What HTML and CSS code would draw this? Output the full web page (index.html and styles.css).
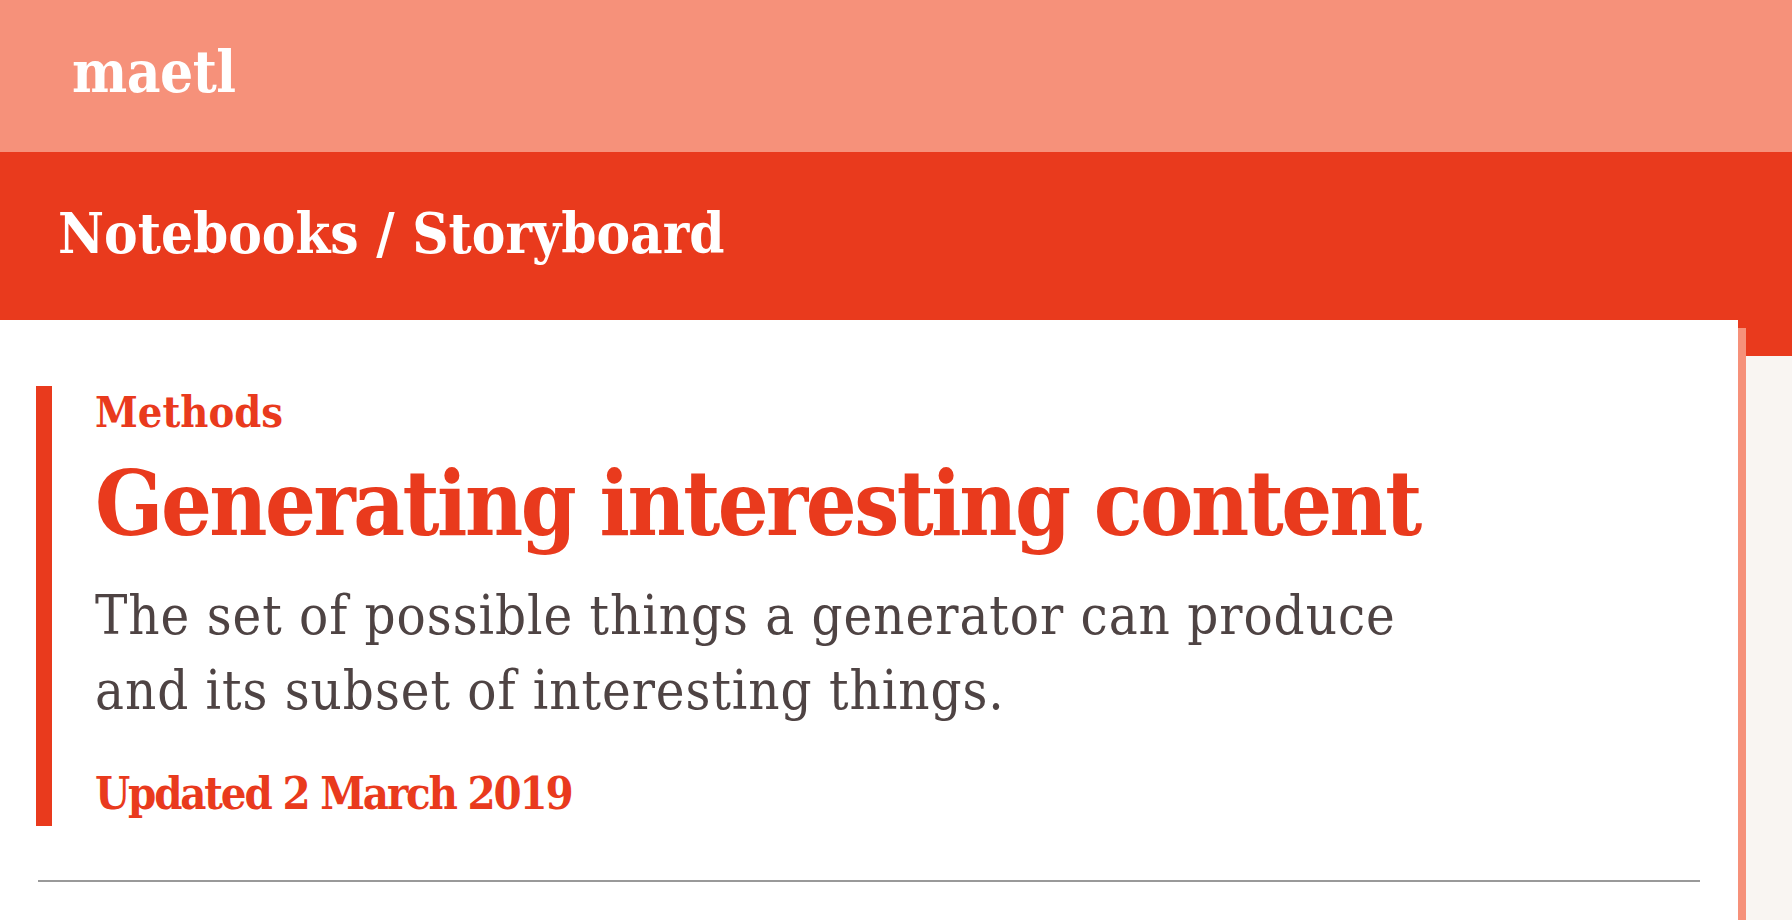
FILE: index.html
```html
<!DOCTYPE html>
<html lang="en">
<head>
<meta charset="utf-8">
<title>Generating interesting content — maetl</title>
<link rel="stylesheet" href="styles.css">
</head>
<body>
<header class="site-header">
  <a class="site-logo" href="#">maetl</a>
</header>
<nav class="section-nav">
  <h2 class="breadcrumb"><a href="#">Notebooks</a> / <a href="#">Storyboard</a></h2>
</nav>
<main class="card">
  <div class="intro">
    <p class="category">Methods</p>
    <h1 class="title">Generating interesting content</h1>
    <p class="summary">The set of possible things a generator can produce and its subset of interesting things.</p>
    <p class="updated">Updated 2 March 2019</p>
  </div>
  <hr class="rule">
</main>
</body>
</html>
```

FILE: styles.css
```css
html, body {
  margin: 0;
  padding: 0;
}
body {
  background: #f9f5f2;
  font-family: "DejaVu Serif", "Liberation Serif", serif;
  font-stretch: condensed;
  color: #4e4343;
}
a {
  color: inherit;
  text-decoration: none;
}
.site-header {
  background: #f6917a;
  height: 152px;
  box-sizing: border-box;
  padding: 39px 0 0 72px;
}
.site-logo {
  display: block;
  color: #ffffff;
  font-weight: bold;
  font-size: 58px;
  line-height: 66px;
  letter-spacing: -0.5px;
}
.section-nav {
  background: #e93a1d;
  height: 204px;
  box-sizing: border-box;
  padding: 40px 0 0 58px;
}
.breadcrumb {
  margin: 0;
  color: #ffffff;
  font-weight: bold;
  font-size: 56px;
  line-height: 82px;
}
.card {
  position: relative;
  display: block;
  background: #ffffff;
  margin: -36px 54px 0 0;
  padding: 66px 0 200px 0;
  box-shadow: 8px 8px 0 #f6917a;
}
.intro {
  margin-left: 36px;
  border-left: 16px solid #e93a1d;
  padding: 0 0 5px 43px;
}
.category {
  margin: 0;
  color: #e93a1d;
  font-weight: bold;
  font-size: 43px;
  line-height: 53px;
}
.title {
  margin: 16px 0 0 0;
  color: #e93a1d;
  font-weight: bold;
  font-size: 89px;
  line-height: 98px;
  letter-spacing: -2.5px;
}
.summary {
  margin: 25px 0 0 0;
  max-width: 1360px;
  font-size: 54px;
  line-height: 75px;
  letter-spacing: 0.95px;
}
.updated {
  margin: 39px 0 0 0;
  color: #e93a1d;
  font-weight: bold;
  font-size: 45px;
  line-height: 54px;
  letter-spacing: -2.2px;
}
.rule {
  margin: 54px 38px 0 38px;
  border: 0;
  height: 2px;
  background: #999999;
}
```
